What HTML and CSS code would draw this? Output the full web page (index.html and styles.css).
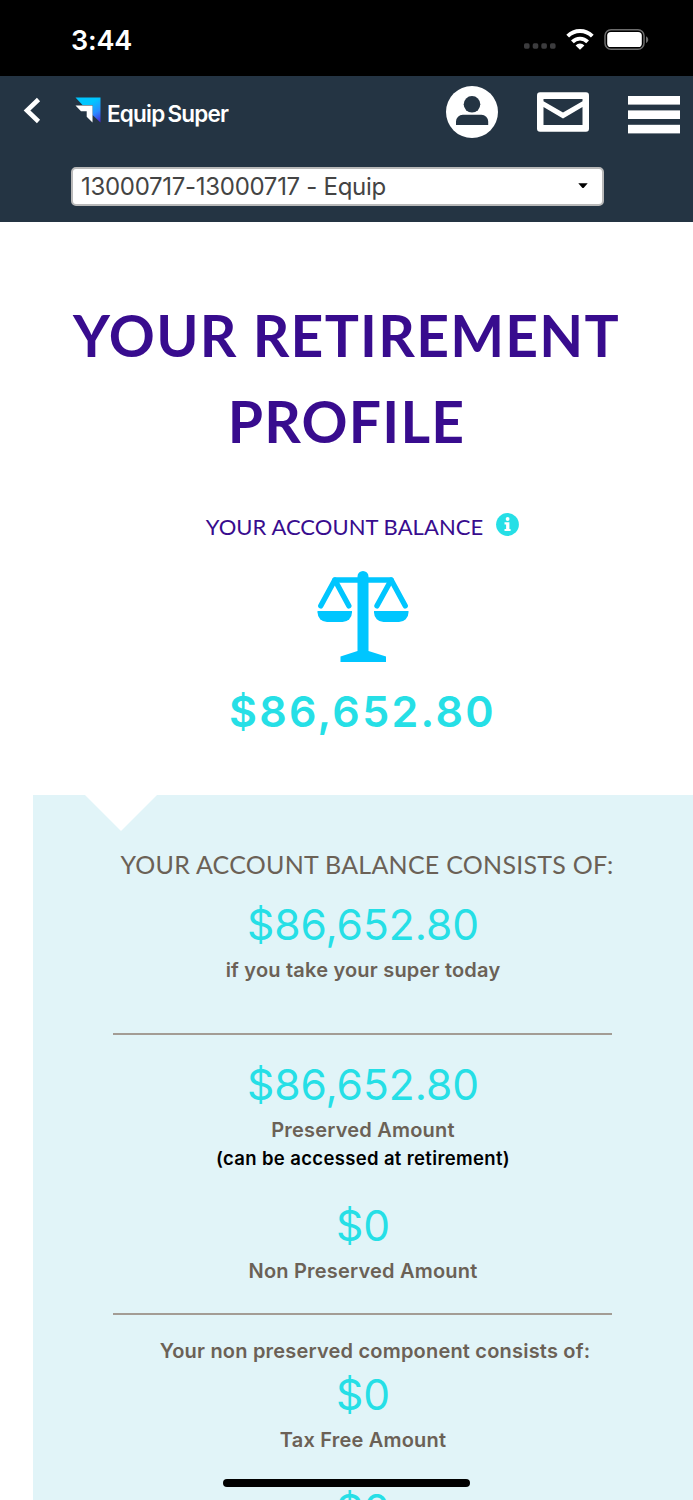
FILE: index.html
```html
<!DOCTYPE html>
<html lang="en">
<head>
    <meta charset="UTF-8">
    <meta name="viewport" content="width=device-width, initial-scale=1.0">
    <title>Your Retirement Profile</title>
    <link rel="stylesheet" href="styles.css">
</head>
<body>
    <div class="status-bar">
        <span class="time">3:44</span>
        <div class="status-icons">
            <svg class="signal" width="32" height="6" viewBox="0 0 32 6" fill="#3c3c3e">
                <rect x="0" y="0.3" width="5.6" height="5.4" rx="1.6"/>
                <rect x="8.7" y="0.3" width="5.6" height="5.4" rx="1.6"/>
                <rect x="17.3" y="0.3" width="5.6" height="5.4" rx="1.6"/>
                <rect x="26" y="0.3" width="5.6" height="5.4" rx="1.6"/>
            </svg>
            <svg class="wifi" width="28" height="22" viewBox="0 0 28 22">
                <g fill="none" stroke="#fff" stroke-width="3.9">
                    <path d="M1.7 7.2a17.3 17.3 0 0 1 24.6 0"/>
                    <path d="M6.4 12.8a10.6 10.6 0 0 1 15.2 0"/>
                </g>
                <path d="M14 20.8l-4.400-4.400a6.200 6.200 0 0 1 8.800 0z" fill="#fff"/>
            </svg>
            <svg class="battery" width="45" height="22" viewBox="0 0 45 22">
                <rect x="1" y="0.8" width="39" height="19.4" rx="6" fill="none" stroke="#6c6c6c" stroke-width="1.5"/>
                <rect x="3.2" y="3" width="34.6" height="15" rx="3.600" fill="#fff"/>
                <path d="M42 7.2c3 1.400 3 5.400 0 6.800z" fill="#6c6c6c"/>
            </svg>
        </div>
    </div>

    <header class="header">
        <div class="nav">
            <svg class="back" width="18" height="28" viewBox="0 0 18 28">
                <path d="M15.500 2.500L4 13.500l11.500 11" fill="none" stroke="#fff" stroke-width="4.600"/>
            </svg>
            <div class="logo">
                <svg width="26" height="26" viewBox="0 0 26 26">
                    <defs>
                        <linearGradient id="brand" x1="0.55" y1="0.25" x2="1" y2="1">
                            <stop offset="0" stop-color="#00c6ff"/>
                            <stop offset="0.5" stop-color="#2b8cff"/>
                            <stop offset="1" stop-color="#4a1fd6"/>
                        </linearGradient>
                    </defs>
                    <path d="M0.500 0.500h25v25l-8-7.500V8H7.500z" fill="url(#brand)"/>
                    <path d="M0.500 8.500h17v17l-5.800-5.700v-5.500H6z" fill="#fff"/>
                </svg>
                <span class="logo-text">Equip<span class="logo-super">Super</span></span>
            </div>
            <div class="nav-icons">
                <svg width="52" height="52" viewBox="0 0 52 52">
                    <circle cx="26" cy="26" r="26" fill="#fff"/>
                    <circle cx="26" cy="18.300" r="8.300" fill="#243443"/>
                    <path d="M10 39v-3.500a6.800 6.800 0 0 1 6.800-6.700h18.600a6.800 6.800 0 0 1 6.800 6.700V39z" fill="#243443"/>
                </svg>
                <svg width="52" height="40" viewBox="0 0 52 40">
                    <rect y="0.300" width="52" height="39.400" rx="3" fill="#fff"/>
                    <path d="M6.500 7h39v2.300L26 20.500 6.500 9.300zM6.500 15L26 26.500 45.500 15v18h-39z" fill="#243443"/>
                </svg>
                <svg class="menu" width="52" height="38" viewBox="0 0 52 38" fill="#fff">
                    <rect width="52" height="8.600"/>
                    <rect y="14.400" width="52" height="8.600"/>
                    <rect y="28.800" width="52" height="8.600"/>
                </svg>
            </div>
        </div>
        <div class="account-select">
            <span>13000717-13000717 - Equip</span>
            <svg width="10" height="6" viewBox="0 0 10 6"><path d="M0.300 0.300h9.400L6 4.500q-1 1-2 0z"/></svg>
        </div>
    </header>

    <h1 class="title">YOUR RETIREMENT<br>PROFILE</h1>

    <section class="balance">
        <div class="balance-label">
            <h2>YOUR ACCOUNT BALANCE</h2>
            <svg width="23" height="23" viewBox="0 0 23 23">
                <circle cx="11.500" cy="11.500" r="11.400" fill="#26dfe6"/>
                <circle cx="11.600" cy="6" r="1.900" fill="#fff"/>
                <path d="M8.500 9.300h4.900v6.700h1.200v2.100H8.500V16h1.600v-4.600H8.500z" fill="#fff"/>
            </svg>
        </div>
        <svg class="scales" width="92" height="92" viewBox="0 0 92 92">
            <g fill="none" stroke="#00c6ff" stroke-width="5.400" stroke-linecap="round" stroke-linejoin="round">
                <path d="M3.800 34.800L17.800 9h56.400l14 25.800"/>
                <path d="M17.800 9l14 25.800M74.200 9L60 34.800"/>
            </g>
            <g fill="#00c6ff">
                <path d="M0.500 40h34.500v1.500a9.500 9.500 0 0 1-9.500 9.500h-15.500a9.500 9.500 0 0 1-9.500-9.500z"/>
                <path d="M57 40h34.500v1.500a9.500 9.500 0 0 1-9.500 9.500h-15.500a9.500 9.500 0 0 1-9.500-9.500z"/>
                <path d="M40.500 5.500a5.500 5.500 0 0 1 11 0v74.500l17.500 5.500v5.500h-45.500v-5.500l17-5.500z"/>
            </g>
        </svg>
        <p class="balance-total">$86,652.80</p>
    </section>

    <section class="panel">
        <h3 class="panel-title">YOUR ACCOUNT BALANCE CONSISTS OF:</h3>
        <p class="amount">$86,652.80</p>
        <p class="label">if you take your super today</p>
        <hr class="rule">
        <p class="amount">$86,652.80</p>
        <p class="label">Preserved Amount</p>
        <p class="note">(can be accessed at retirement)</p>
        <p class="amount spaced">$0</p>
        <p class="label">Non Preserved Amount</p>
        <hr class="rule second">
        <p class="label intro">Your non preserved component consists of:</p>
        <p class="amount">$0</p>
        <p class="label">Tax Free Amount</p>
        <p class="amount last">$0</p>
    </section>

    <div class="home-bar"></div>
</body>
</html>
```
FILE: styles.css
```css
* {
    box-sizing: border-box;
}

body {
    margin: 0;
    height: 1500px;
    overflow: hidden;
    background-color: #fff;
    font-family: Lato, sans-serif;
}

h1, h2, h3, p {
    margin: 0;
    white-space: nowrap;
}

svg {
    display: block;
    flex: none;
}

/* Phone status bar */
.status-bar {
    display: flex;
    justify-content: space-between;
    height: 76px;
    padding: 0 44px 0 71px;
    background-color: #000;
    color: #fff;
}

.time {
    font-family: Inter, sans-serif;
    font-size: 27px;
    font-weight: 600;
    line-height: 81px;
    letter-spacing: -0.2px;
}

.status-icons {
    display: flex;
    padding-top: 29px;
}

.signal {
    margin-top: 14px;
}

.wifi {
    margin-left: 10px;
}

.battery {
    margin-left: 10px;
}

/* Header */
.header {
    height: 146px;
    background-color: #243443;
}

.nav {
    display: flex;
    height: 91px;
    padding: 10px 13px 0 23px;
}

.back {
    margin-top: 11px;
}

.logo {
    display: flex;
    margin: 11px 0 0 34px;
}

.logo-text {
    margin-left: 6px;
    font-family: Inter, sans-serif;
    font-size: 22.5px;
    font-weight: 600;
    line-height: 33px;
    letter-spacing: -0.8px;
    color: #fff;
}

.logo-super {
    margin-left: 3px;
}

.nav-icons {
    display: flex;
    align-items: center;
    gap: 39px;
    height: 52px;
    margin-left: auto;
}

.menu {
    margin-top: 5px;
}

.account-select {
    display: flex;
    align-items: center;
    justify-content: space-between;
    width: 533px;
    height: 39px;
    margin-left: 71px;
    padding: 0 14px 1px 8px;
    border: 2px solid #b9b9b9;
    border-radius: 5px;
    background-color: #fff;
    color: #444;
    font-family: Inter, sans-serif;
    font-size: 24px;
    letter-spacing: -0.3px;
}

/* Page title and total */
.title {
    padding-top: 70px;
    color: #380c8e;
    font-size: 57px;
    font-weight: 700;
    line-height: 86px;
    letter-spacing: 1.25px;
    text-align: center;
}

.balance {
    display: flex;
    flex-direction: column;
    align-items: center;
    height: 331px;
    padding: 49px 0 0 32px;
}

.balance-label {
    display: flex;
    gap: 13px;
}

.balance-label h2 {
    color: #380c8e;
    font-size: 22px;
    font-weight: 400;
    line-height: 28px;
    letter-spacing: 0.05px;
}

.scales {
    margin-top: 30px;
}

.balance-total {
    margin-top: 18px;
    color: #26dfe6;
    font-family: Inter, sans-serif;
    font-size: 43px;
    font-weight: 600;
    line-height: 60px;
    letter-spacing: 2.3px;
}

/* Balance breakdown */
.panel {
    display: flow-root;
    height: 721px;
    margin-left: 33px;
    background-color: #e1f4f8;
    text-align: center;
    position: relative;
    overflow: hidden;
}

.panel::before {
    content: "";
    position: absolute;
    top: 0;
    left: 52px;
    border: solid transparent;
    border-width: 36px 36.5px 0;
    border-top-color: #fff;
}

.panel-title {
    margin: 49px 0 11px 8px;
    color: #6b6156;
    font-size: 25px;
    font-weight: 400;
    line-height: 40px;
    letter-spacing: 0.25px;
}

.amount {
    color: #26dfe6;
    font-family: Inter, sans-serif;
    font-size: 42.5px;
    font-weight: 400;
    line-height: 60px;
}

.label {
    margin-top: 1px;
    color: #6b6156;
    font-family: Inter, sans-serif;
    font-size: 20px;
    font-weight: 600;
    line-height: 28px;
    letter-spacing: 0.2px;
}

.note {
    color: #000;
    font-family: Inter, sans-serif;
    font-size: 18.5px;
    font-weight: 600;
    line-height: 28px;
    letter-spacing: 0.35px;
}

.rule {
    width: 499px;
    height: 2px;
    margin: 49px 0 20px 80px;
    border: 0;
    background-color: #a39c95;
}

.rule.second {
    margin: 28px 0 22px 80px;
}

.spaced {
    margin-top: 24px;
}

.intro {
    margin: 0 0 0 24px;
}

.last {
    margin-top: 26px;
}

.home-bar {
    position: fixed;
    left: 223px;
    bottom: 13px;
    width: 247px;
    height: 8px;
    border-radius: 4px;
    background-color: #000;
}
```
